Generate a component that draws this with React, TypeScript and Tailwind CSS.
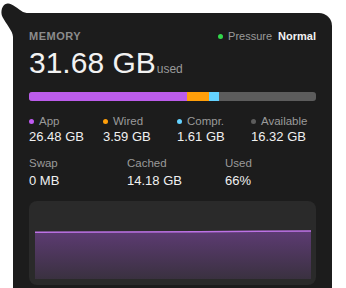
const legend = [
  { label: "App", value: "26.48 GB", dot: "bg-[#bf5af2]" },
  { label: "Wired", value: "3.59 GB", dot: "bg-[#ff9f0a]" },
  { label: "Compr.", value: "1.61 GB", dot: "bg-[#64d2ff]" },
  { label: "Available", value: "16.32 GB", dot: "bg-[#5c5c5c]" },
];

const stats = [
  { label: "Swap", value: "0 MB" },
  { label: "Cached", value: "14.18 GB" },
  { label: "Used", value: "66%" },
];

const Tail = () => (
  <svg
    className="absolute left-0 top-0"
    width="44"
    height="44"
    viewBox="0 0 44 44"
  >
    <path
      d="M13 44 L13 37 C13 31 6 24 2.5 17 C0 12 2 4 7.5 3.5 C12 3 18 9 23 12 C25.5 13 27.5 13 31 13 L44 13 L44 44 Z"
      fill="#1c1c1c"
    />
  </svg>
);

const UsageChart = () => (
  <svg width="287" height="84" viewBox="0 0 287 84" className="block">
    <defs>
      <linearGradient id="memFill" x1="0" y1="0" x2="0" y2="1">
        <stop offset="0%" stopColor="#5d3b73" />
        <stop offset="100%" stopColor="#3a3140" />
      </linearGradient>
    </defs>
    <path
      d="M6 31.2 L90 31 L170 30.8 L230 30.3 L282 30 L282 78 L6 78 Z"
      fill="url(#memFill)"
    />
    <polyline
      points="6,31.2 90,31 170,30.8 230,30.3 282,30"
      fill="none"
      stroke="#bd72e6"
      strokeWidth="1.6"
    />
  </svg>
);

const App = () => {
  return (
    <div className="relative h-[288px] w-[346px] overflow-hidden bg-white font-['Liberation_Sans',Arial,sans-serif]">
      <Tail />
      <section className="relative ml-[13px] mt-[13px] flex h-[300px] w-[319px] flex-col rounded-tr-[13px] rounded-b-[13px] bg-[#1c1c1c] px-4 pt-4">
        <div className="flex h-[14px] items-center justify-between">
          <h2 className="text-[11px] leading-[14px] font-bold tracking-[0.5px] text-[#8c8c8c]">
            MEMORY
          </h2>
          <div className="flex items-center text-[11px] leading-[14px]">
            <span className="mr-[5px] h-[5px] w-[5px] rounded-full bg-[#32d74b]"></span>
            <span className="text-[#9a9a9a]">Pressure</span>
            <span className="ml-[6px] font-bold text-[#f2f2f2]">Normal</span>
          </div>
        </div>

        <div className="mt-[2px] flex items-baseline">
          <span className="text-[30px] leading-[36px] text-[#f2f2f2]">31.68 GB</span>
          <span className="ml-[1px] text-[12px] text-[#9a9a9a]">used</span>
        </div>

        <div className="mt-[11px] flex h-[9px] w-full overflow-hidden rounded-[3px] bg-[#5c5c5c]">
          <div className="h-full w-[158px] bg-[#bb5ceb]"></div>
          <div className="h-full w-[22px] bg-[#ff9f0a]"></div>
          <div className="h-full w-[10px] bg-[#64d2ff]"></div>
        </div>

        <div className="mt-[13px] grid grid-cols-4 gap-x-[9px]">
          {legend.map((item) => (
            <div key={item.label} className="flex flex-col">
              <div className="flex h-[14px] items-center text-[11.5px] leading-[14px] text-[#9a9a9a]">
                <span className={`mr-[5px] h-[5px] w-[5px] rounded-full ${item.dot}`}></span>
                {item.label}
              </div>
              <div className="mt-[1px] text-[13px] leading-[16px] text-[#f0f0f0]">
                {item.value}
              </div>
            </div>
          ))}
        </div>

        <div className="mt-[11px] grid grid-cols-3 gap-x-[7px]">
          {stats.map((item) => (
            <div key={item.label} className="flex flex-col">
              <div className="text-[11.5px] leading-[14px] text-[#9a9a9a]">{item.label}</div>
              <div className="mt-[3px] text-[13px] leading-[16px] text-[#f0f0f0]">
                {item.value}
              </div>
            </div>
          ))}
        </div>

        <div className="mt-[12px] h-[84px] w-full overflow-hidden rounded-[8px] bg-[#2a2a2a]">
          <UsageChart />
        </div>
      </section>
    </div>
  );
};

export default App;
